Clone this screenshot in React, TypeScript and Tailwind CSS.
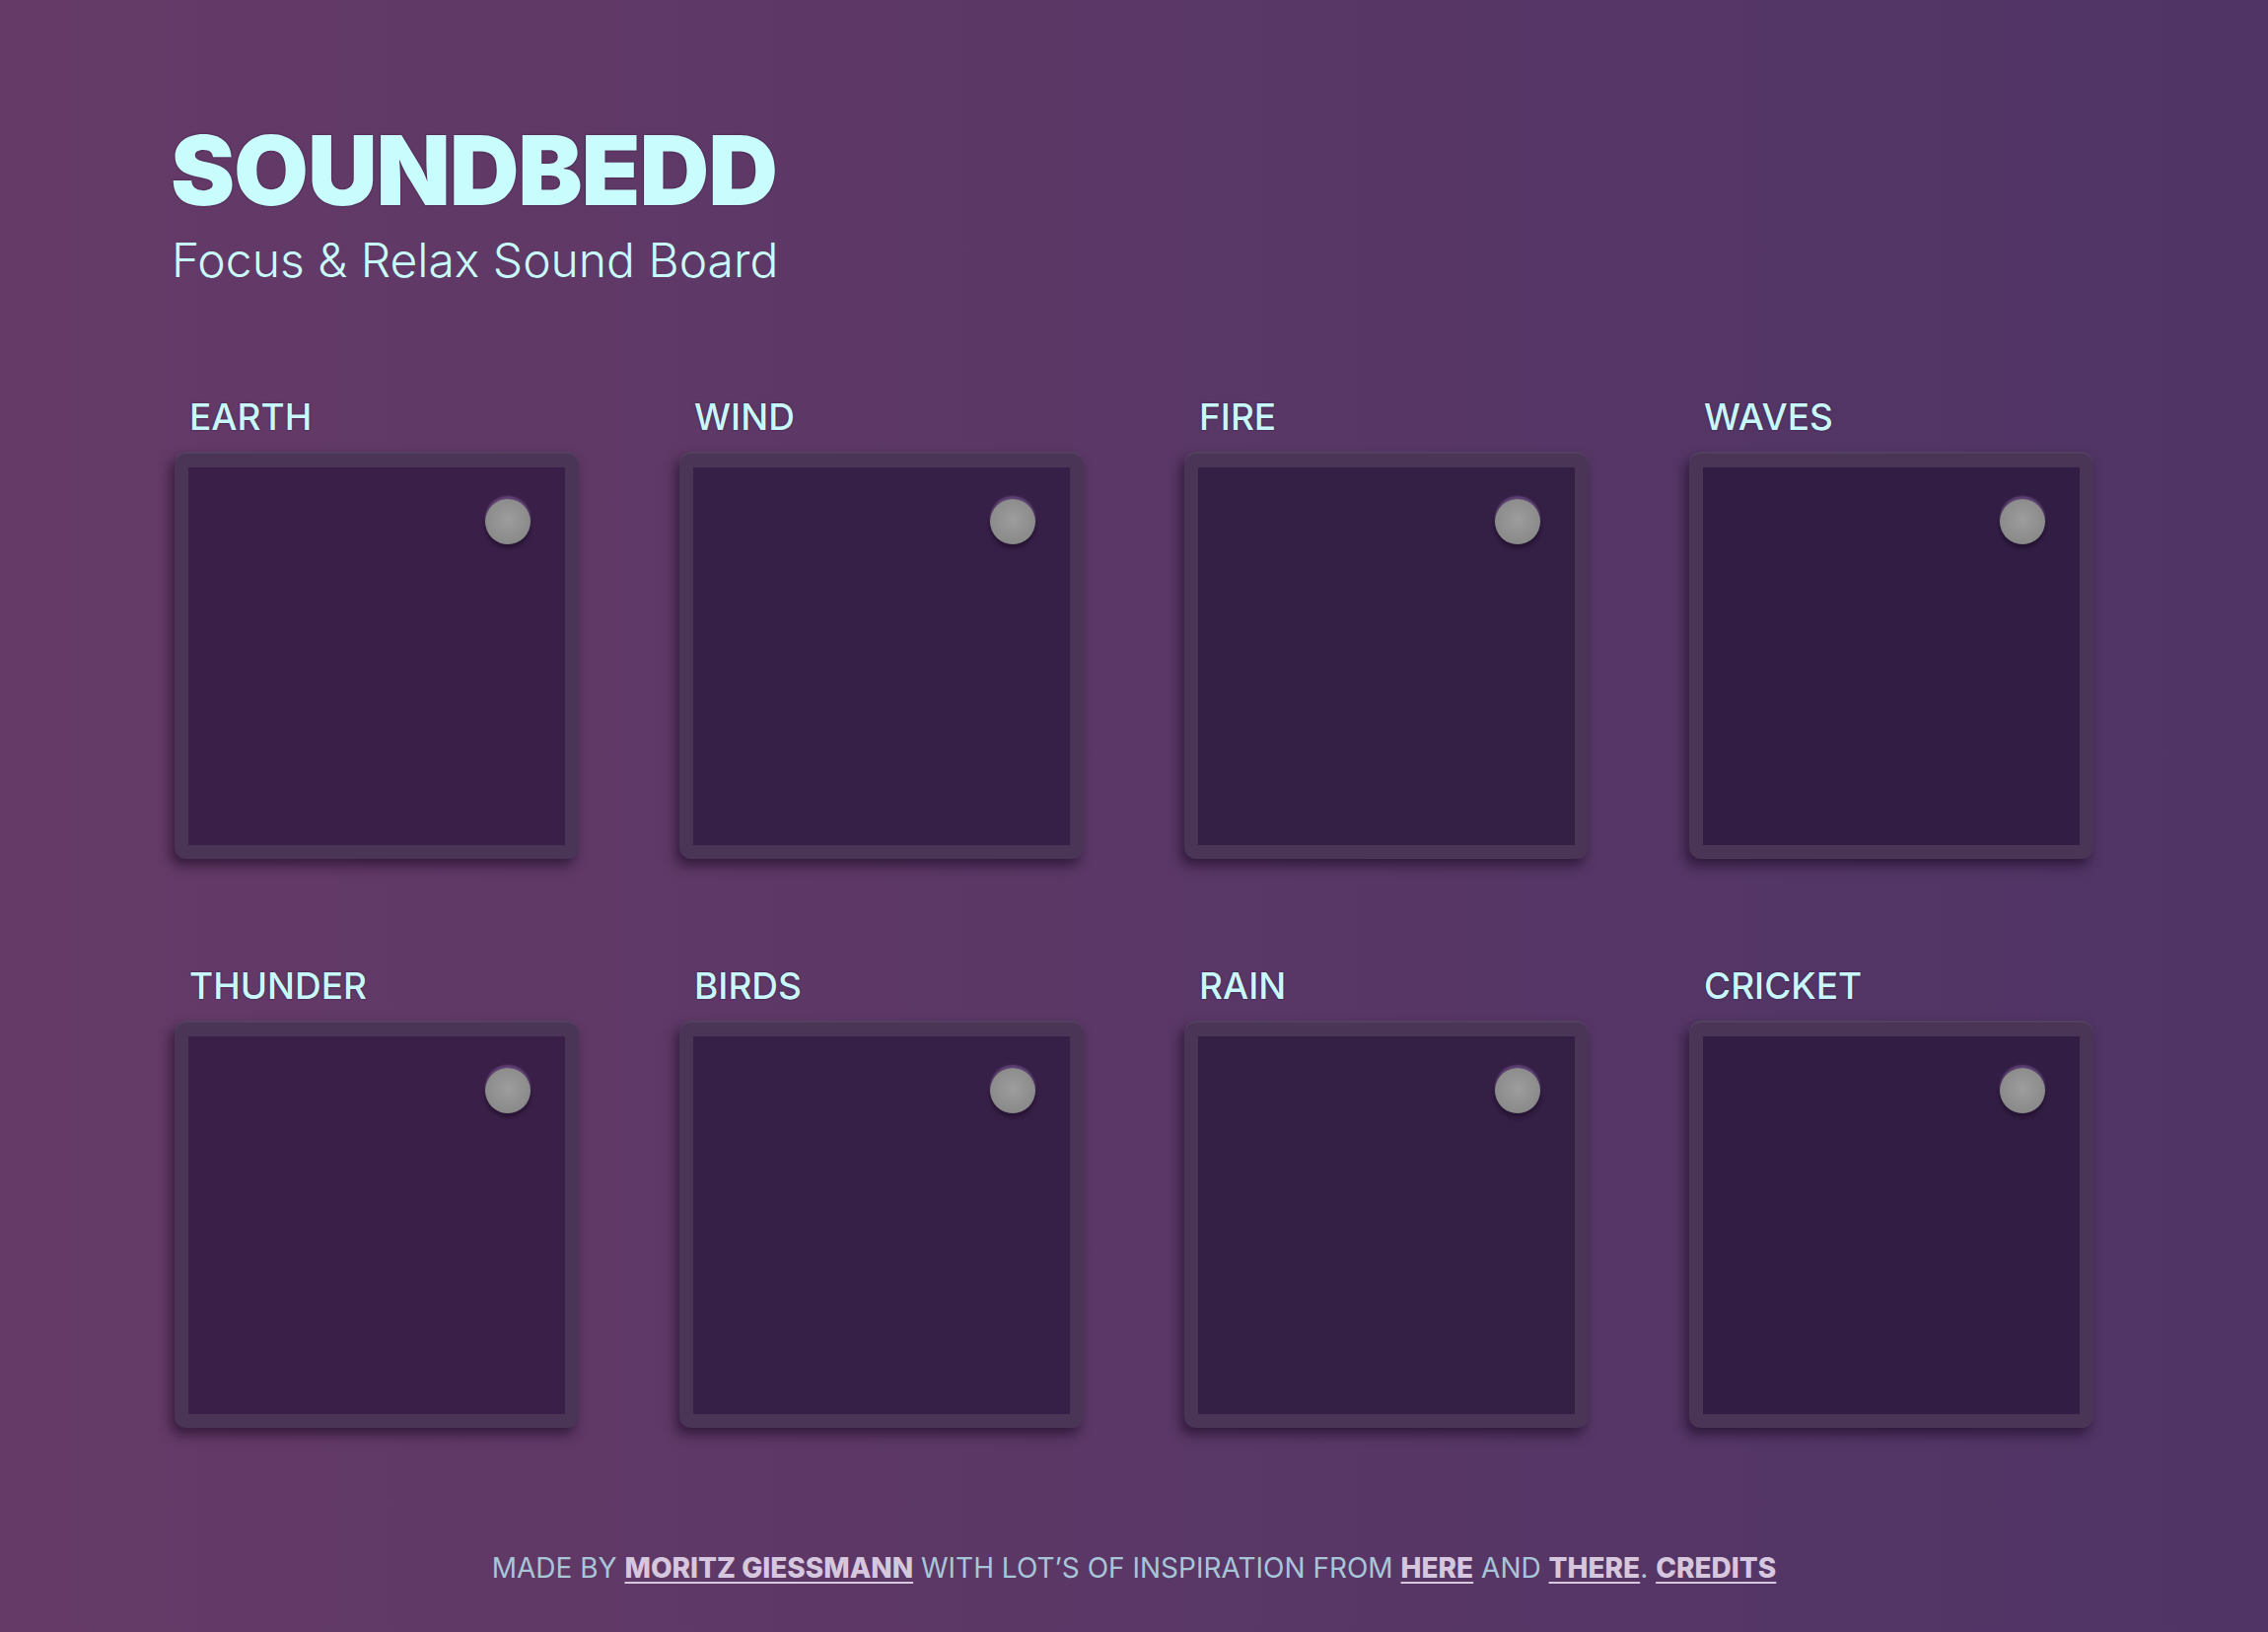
const sounds = ["EARTH", "WIND", "FIRE", "WAVES", "THUNDER", "BIRDS", "RAIN", "CRICKET"]

// inner panel darkens slightly from left to right, like the page gradient
const panelColors = ["bg-[#3a2048]", "bg-[#372047]", "bg-[#341f45]", "bg-[#321e44]"]

function Pad({ name, index }: { name: string; index: number }) {
  return (
    <div>
      <h2 className="pl-[15px] text-[37px] leading-none font-medium text-[#c9f8fc] [text-shadow:0_0_2px_rgba(40,10,50,0.7)]">
        {name}
      </h2>
      <div className="mt-[17px] h-[413px] rounded-[12px] bg-[#4a3557] px-[14px] pt-[16px] pb-[14px] shadow-[-4px_7px_12px_rgba(20,5,30,0.55),inset_0_2px_1px_rgba(255,255,255,0.06)]">
        <div className={`relative h-full ${panelColors[index % 4]}`}>
          {/* knob */}
          <div className="absolute right-[35px] top-[32px] h-[46px] w-[46px] rounded-full bg-[radial-gradient(circle_at_50%_45%,#9d9d9d,#8a8a8a_70%,#7c7c7c)] shadow-[0_-3px_2px_rgba(150,110,180,0.45),0_4px_4px_rgba(20,5,30,0.5)]"></div>
        </div>
      </div>
    </div>
  )
}

export default function App() {
  return (
    <div className="min-h-screen w-full bg-gradient-to-r from-[#653a67] to-[#4f3465] font-['Inter','Noto_Sans',sans-serif]">
      <div className="mx-auto w-[1946px] pt-[124px] pb-[50px]">
        <h1 className="-ml-[4px] text-[98px] leading-none font-black tracking-[-0.012em] text-[#c8fcfd] [text-shadow:0_0_2px_rgba(40,10,50,0.7)]">
          SOUNDBEDD
        </h1>
        <p className="-ml-[3px] mt-[18px] text-[48px] leading-none font-light text-[#c8fcfd]">Focus &amp; Relax Sound Board</p>

        <div className="mt-[116px] grid grid-cols-4 gap-x-[102px] gap-y-[110px]">
          {sounds.map((s, i) => (
            <Pad key={s} name={s} index={i} />
          ))}
        </div>

        <footer className="mt-[128px] text-center text-[28px] leading-none text-[#a8c6d8]">
          MADE BY{" "}
          <a className="font-extrabold text-[#d6c7de] underline decoration-2 underline-offset-4">MORITZ GIESSMANN</a>{" "}
          WITH LOT’S OF INSPIRATION FROM{" "}
          <a className="font-extrabold text-[#d6c7de] underline decoration-2 underline-offset-4">HERE</a> AND{" "}
          <a className="font-extrabold text-[#d6c7de] underline decoration-2 underline-offset-4">THERE</a>.{" "}
          <a className="font-extrabold text-[#d6c7de] underline decoration-2 underline-offset-4">CREDITS</a>
        </footer>
      </div>
    </div>
  )
}
